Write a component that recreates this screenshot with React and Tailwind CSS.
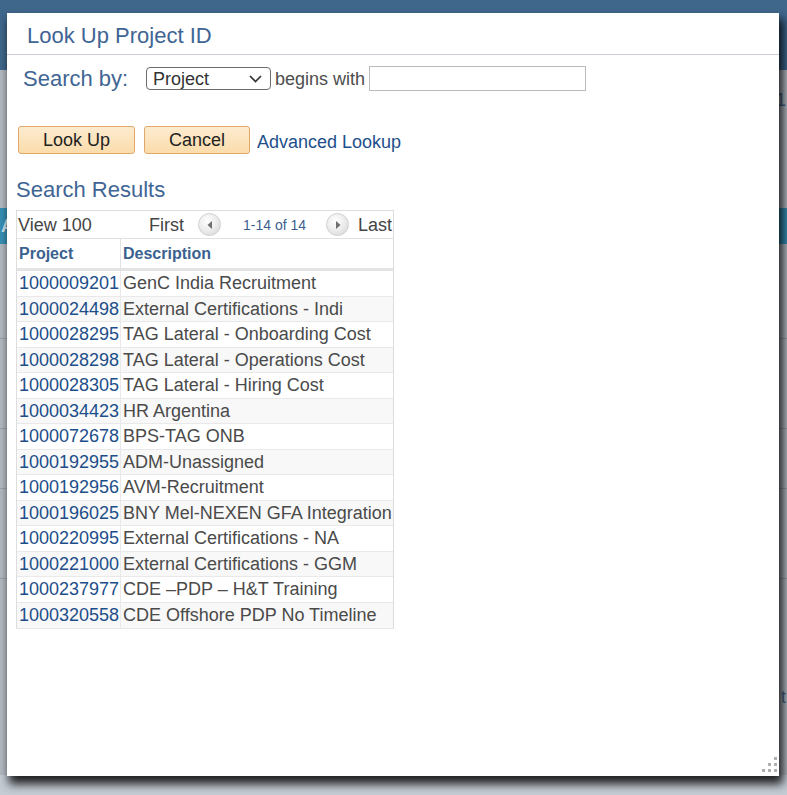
import React from "react";

const rows = [
  ["1000009201", "GenC India Recruitment"],
  ["1000024498", "External Certifications - Indi"],
  ["1000028295", "TAG Lateral - Onboarding Cost"],
  ["1000028298", "TAG Lateral - Operations Cost"],
  ["1000028305", "TAG Lateral - Hiring Cost"],
  ["1000034423", "HR Argentina"],
  ["1000072678", "BPS-TAG ONB"],
  ["1000192955", "ADM-Unassigned"],
  ["1000192956", "AVM-Recruitment"],
  ["1000196025", "BNY Mel-NEXEN GFA Integration"],
  ["1000220995", "External Certifications - NA"],
  ["1000221000", "External Certifications - GGM"],
  ["1000237977", "CDE \u2013PDP \u2013 H&T Training"],
  ["1000320558", "CDE Offshore PDP No Timeline"],
];

function NavCircle({ dir }) {
  return (
    <span className="flex h-[23px] w-[23px] items-center justify-center rounded-full border border-[#d0d0d0] bg-[radial-gradient(circle_at_40%_35%,#ffffff_0%,#eeeeee_45%,#d2d2d2_100%)]">
      <svg width="8" height="10" viewBox="0 0 8 10">
        {dir === "left" ? (
          <path d="M6 1 L1.5 5 L6 9 Z" fill="#6f6f6f" />
        ) : (
          <path d="M2 1 L6.5 5 L2 9 Z" fill="#6f6f6f" />
        )}
      </svg>
    </span>
  );
}

export default function App() {
  return (
    <div
      className="relative h-[795px] w-[787px] overflow-hidden bg-[#b3bac2]"
      style={{ fontFamily: '"Liberation Sans", Arial, sans-serif' }}
    >
      {/* dimmed page behind */}
      <div className="h-[70px] bg-[#3f678c]" />
      <div className="flex h-[40px] items-end justify-end pr-[1px] text-[18px] leading-[20px] text-[#4b6a8c]">1</div>
      <div className="h-[98px]" />
      <div className="flex h-[36px] items-center bg-[#3790b6] pl-[1px] text-[18px] font-bold leading-[18px] text-[#cfe6f2]">
        A
      </div>
      <div className="h-[95px] border-b border-[#9aa1a9]" />
      <div className="h-[90px] border-b border-[#9aa1a9]" />
      <div className="h-[60px] border-b border-[#9aa1a9]" />
      <div className="h-[90px] border-b border-[#9aa1a9]" />
      <div className="flex h-[128px] items-end justify-end pr-[1px] text-[18px] leading-[20px] text-[#4b6a8c]">t</div>
      <div className="h-[68px]" />
      <div className="h-[40px] bg-[#c5ccd4]" />

      {/* modal */}
      <div className="absolute left-[7px] top-[13px] h-[763px] w-[772px] bg-white shadow-[3px_7px_9px_1px_rgba(0,0,0,0.85)]">
        <div className="flex h-[42px] items-center border-b border-[#c8ced4] pl-[20px] pt-[4px] text-[22px] leading-[26px] text-[#3f6594]">
          Look Up Project ID
        </div>

        <div className="mt-[11px] flex h-[25px] items-center pl-[16px]">
          <span className="w-[123px] text-[22px] leading-[25px] text-[#3f6594]">Search by:</span>
          <div className="flex h-[23px] w-[125px] items-center justify-between rounded-[4px] border border-[#6b6b6b] pl-[6px] pr-[8px] text-[18px] leading-[20px] text-[#333]">
            <span>Project</span>
            <svg width="13" height="8" viewBox="0 0 13 8">
              <path d="M1 1 L6.5 6.5 L12 1" fill="none" stroke="#333" strokeWidth="1.7" />
            </svg>
          </div>
          <span className="ml-[4px] text-[18px] leading-[20px] text-[#4d4d4d]">begins with</span>
          <div className="ml-[4px] h-[25px] w-[217px] border border-[#bbbbbb]" />
        </div>

        <div className="mt-[35px] flex h-[28px] items-center pl-[11px]">
          <button className="h-[28px] w-[117px] rounded-[3px] border border-[#e2a86b] bg-gradient-to-b from-[#fdebcf] to-[#fbdcab] text-[18px] leading-[20px] text-[#222]">
            Look Up
          </button>
          <button className="ml-[9px] h-[28px] w-[106px] rounded-[3px] border border-[#e2a86b] bg-gradient-to-b from-[#fdebcf] to-[#fbdcab] text-[18px] leading-[20px] text-[#222]">
            Cancel
          </button>
          <span className="ml-[7px] pt-[3px] text-[18px] leading-[20px] text-[#1e4f8c]">Advanced Lookup</span>
        </div>

        <div className="mt-[23px] pl-[9px] text-[22px] leading-[26px] text-[#3f6594]">Search Results</div>

        <div className="ml-[9px] mt-[7px] w-[378px] border border-[#dddddd] border-b-[#e6e6e6]">
          <div className="flex h-[27px] items-center pl-[1px] text-[18px] leading-[20px] text-[#444]">
            <span className="w-[131px]">View 100</span>
            <span>First</span>
            <span className="ml-[14px]">
              <NavCircle dir="left" />
            </span>
            <span className="ml-[22px] text-[14px] leading-[16px] text-[#3d5f8c]">1-14 of 14</span>
            <span className="ml-[20px]">
              <NavCircle dir="right" />
            </span>
            <span className="ml-[9px]">Last</span>
          </div>
          <div className="flex h-[33px] border-t border-[#e2e2e2] border-b-[3px] border-b-[#e3e3e3] text-[16px] font-bold leading-[18px] text-[#3b6190]">
            <div className="flex w-[104px] items-center border-r border-[#e2e2e2] pl-[2px] pt-[1px]">Project</div>
            <div className="flex flex-1 items-center pl-[2px] pt-[1px]">Description</div>
          </div>
          {rows.map(([id, desc], i) => (
            <div
              key={id}
              className={`flex h-[25.5px] border-b border-[#e9e9e9] text-[18px] leading-[20px] last:border-b-0 ${
                i % 2 === 1 ? "bg-[#f8f8f8]" : "bg-white"
              }`}
            >
              <div className="flex w-[104px] items-center border-r border-[#e9e9e9] pl-[2px] text-[#1d4e8a]">{id}</div>
              <div className="flex flex-1 items-center whitespace-nowrap pl-[2px] text-[#4a4a4a]">{desc}</div>
            </div>
          ))}
        </div>

        {/* resize grip */}
        <svg className="absolute bottom-[3px] right-[1px]" width="16" height="16" viewBox="0 0 16 16">
          <rect x="12" y="0" width="3" height="3" fill="#b0b0b0" />
          <rect x="6" y="6" width="3" height="3" fill="#b0b0b0" />
          <rect x="12" y="6" width="3" height="3" fill="#b0b0b0" />
          <rect x="0" y="12" width="3" height="3" fill="#b0b0b0" />
          <rect x="6" y="12" width="3" height="3" fill="#b0b0b0" />
          <rect x="12" y="12" width="3" height="3" fill="#b0b0b0" />
        </svg>
      </div>
    </div>
  );
}
